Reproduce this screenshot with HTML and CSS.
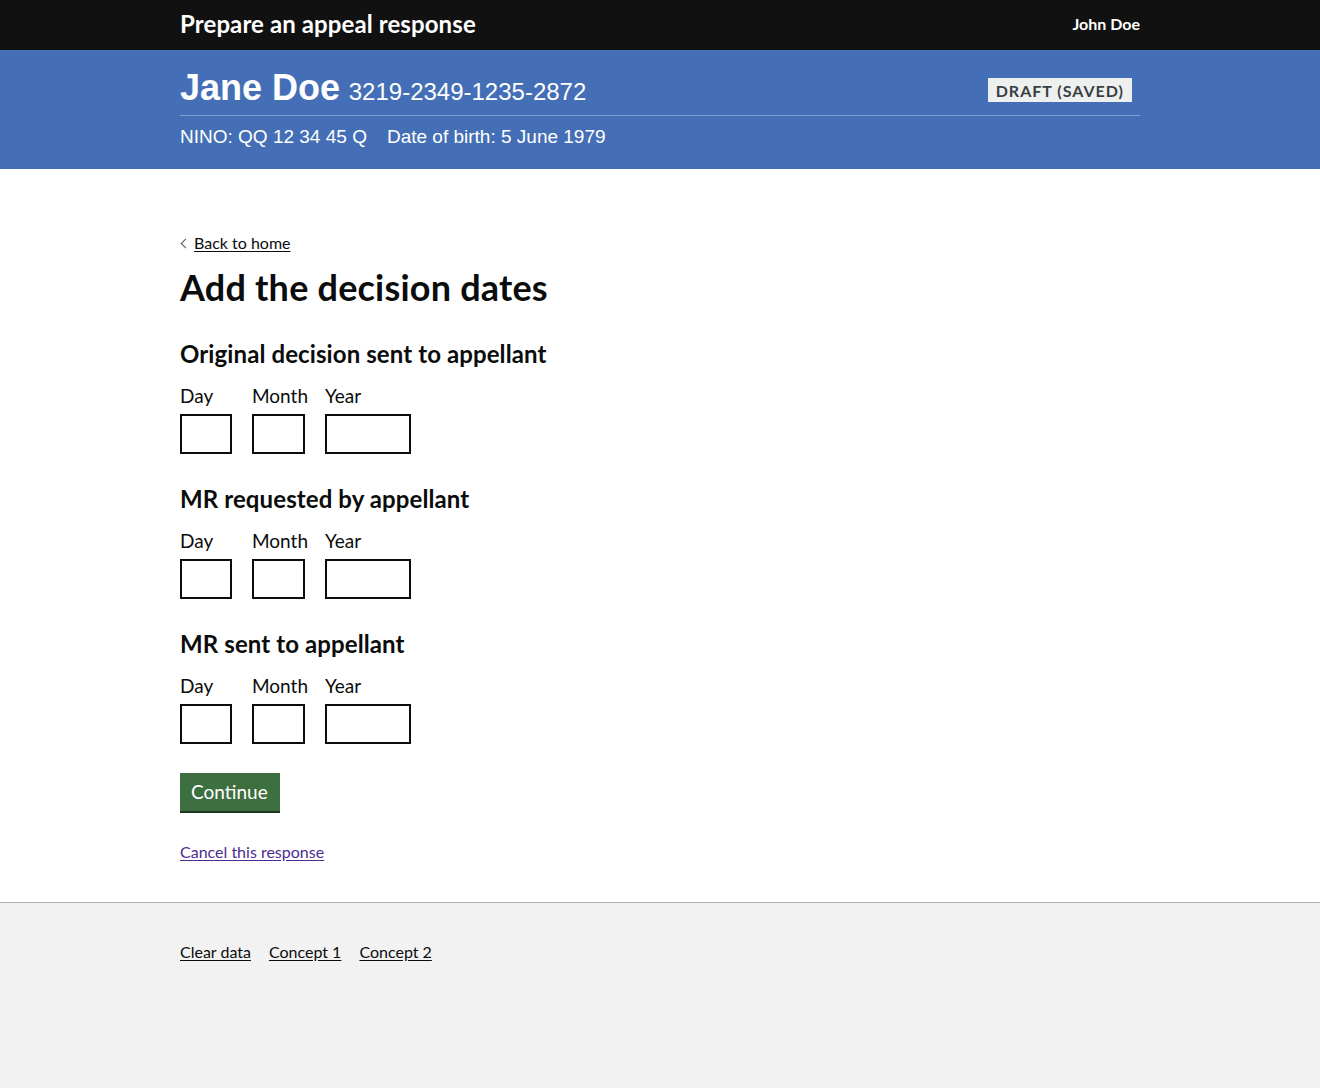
FILE: index.html
```html
<!DOCTYPE html>
<html lang="en">
<head>
<meta charset="utf-8">
<title>Add the decision dates</title>
<link rel="stylesheet" href="styles.css">
</head>
<body>
<header class="topbar">
  <div class="container topbar-inner">
    <span class="service-name">Prepare an appeal response</span>
    <span class="user-name">John Doe</span>
  </div>
</header>
<section class="banner">
  <div class="container">
    <div class="banner-row">
      <h2 class="banner-title"><span class="person">Jane Doe</span> <span class="ref">3219-2349-1235-2872</span></h2>
      <strong class="tag">DRAFT (SAVED)</strong>
    </div>
    <p class="banner-meta"><span>NINO: QQ 12 34 45 Q</span><span>Date of birth: 5 June 1979</span></p>
  </div>
</section>
<main class="main">
  <a class="back-link" href="#">Back to home</a>
  <h1 class="page-title">Add the decision dates</h1>

  <fieldset class="date-group">
    <legend class="legend">Original decision sent to appellant</legend>
    <div class="date-inputs">
      <div class="date-item"><label class="label">Day</label><input class="input" type="text"></div>
      <div class="date-item"><label class="label">Month</label><input class="input" type="text"></div>
      <div class="date-item"><label class="label">Year</label><input class="input" type="text"></div>
    </div>
  </fieldset>

  <fieldset class="date-group">
    <legend class="legend">MR requested by appellant</legend>
    <div class="date-inputs">
      <div class="date-item"><label class="label">Day</label><input class="input" type="text"></div>
      <div class="date-item"><label class="label">Month</label><input class="input" type="text"></div>
      <div class="date-item"><label class="label">Year</label><input class="input" type="text"></div>
    </div>
  </fieldset>

  <fieldset class="date-group">
    <legend class="legend">MR sent to appellant</legend>
    <div class="date-inputs">
      <div class="date-item"><label class="label">Day</label><input class="input" type="text"></div>
      <div class="date-item"><label class="label">Month</label><input class="input" type="text"></div>
      <div class="date-item"><label class="label">Year</label><input class="input" type="text"></div>
    </div>
  </fieldset>

  <button class="button" type="button">Continue</button>
  <p class="cancel"><a class="cancel-link" href="#">Cancel this response</a></p>
</main>
<footer class="footer">
  <div class="container footer-links">
    <a href="#">Clear data</a>
    <a href="#">Concept 1</a>
    <a href="#">Concept 2</a>
  </div>
</footer>
</body>
</html>
```
FILE: styles.css
```css
* { box-sizing: border-box; }
html, body { margin: 0; padding: 0; }
body {
  font-family: Lato, "Noto Sans", Arial, sans-serif;
  color: #0b0c0c;
  background: #f2f2f2;
  min-height: 1088px;
}
.container { width: 960px; margin: 0 auto; }

.topbar { background: #111111; color: #fff; height: 50px; }
.topbar-inner { display: flex; justify-content: space-between; align-items: center; height: 50px; padding-bottom: 3px; }
.service-name { font-weight: 700; font-size: 24px; letter-spacing: 0.1px; }
.user-name { font-weight: 700; font-size: 16px; }

.banner { background: #446fb6; color: #fff; height: 119px; padding-top: 18px; }
.banner-row { display: flex; justify-content: space-between; align-items: center; border-bottom: 1px solid #7d9ed2; padding-bottom: 3px; }
.banner-title { margin: 0; font-family: "Liberation Sans", Arial, sans-serif; font-weight: 700; line-height: 40px; }
.person { font-size: 36px; }
.ref { font-size: 24px; font-weight: 400; margin-left: 2px; }
.tag { background: #eeefef; color: #383f43; font-size: 16px; letter-spacing: 1px; padding: 3px 8px 2px; margin-right: 8px; line-height: 19px; }
.banner-meta { margin: 10px 0 0; font-family: "Liberation Sans", Arial, sans-serif; font-size: 19px; display: flex; gap: 20px; }

.main { background: #fff; padding: 64px 180px 41px; }
.back-link { display: inline-block; color: #0b0c0c; font-size: 16px; position: relative; padding-left: 14px; text-underline-offset: 2px; line-height: 18px; }
.back-link::before {
  content: ""; position: absolute; left: 2px; top: 6px; width: 6px; height: 6px;
  border-left: 1px solid #505a5f; border-bottom: 1px solid #505a5f; transform: rotate(45deg);
}
.page-title { font-size: 36px; font-weight: 700; margin: 15px 0 32px; line-height: 40px; letter-spacing: 0.2px; }

.date-group { border: 0; padding: 0; margin: 0 0 30px; }
.legend { font-size: 24px; font-weight: 700; padding: 0; margin-bottom: 14px; line-height: 30px; letter-spacing: 0.1px; }
.date-inputs { display: grid; grid-template-columns: 52px 53px 86px; column-gap: 20px; }
.date-item { display: flex; flex-direction: column; min-width: 0; }
.label { font-size: 19px; line-height: 25px; margin-bottom: 6px; white-space: nowrap; }
.input { width: 100%; height: 40px; border: 2px solid #0b0c0c; border-radius: 0; font-size: 19px; padding: 5px; background: #fff; }

.button {
  display: inline-block; background: #3e6f41; color: #fff; border: 0; border-radius: 0;
  font-family: inherit; font-size: 19px; line-height: 24px; padding: 7px 12px 7px 11px; margin-top: -1px;
  box-shadow: 0 2px 0 #1f3621; cursor: pointer;
}
.cancel { margin: 31px 0 0; font-size: 16px; }
.cancel-link { color: #4c2c92; text-underline-offset: 2px; }

.footer { border-top: 1px solid #b1b4b6; background: #f2f2f2; padding: 39px 0 120px; }
.footer-links { display: flex; gap: 18px; font-size: 16px; }
.footer-links a { color: #0b0c0c; text-underline-offset: 2px; }
```
